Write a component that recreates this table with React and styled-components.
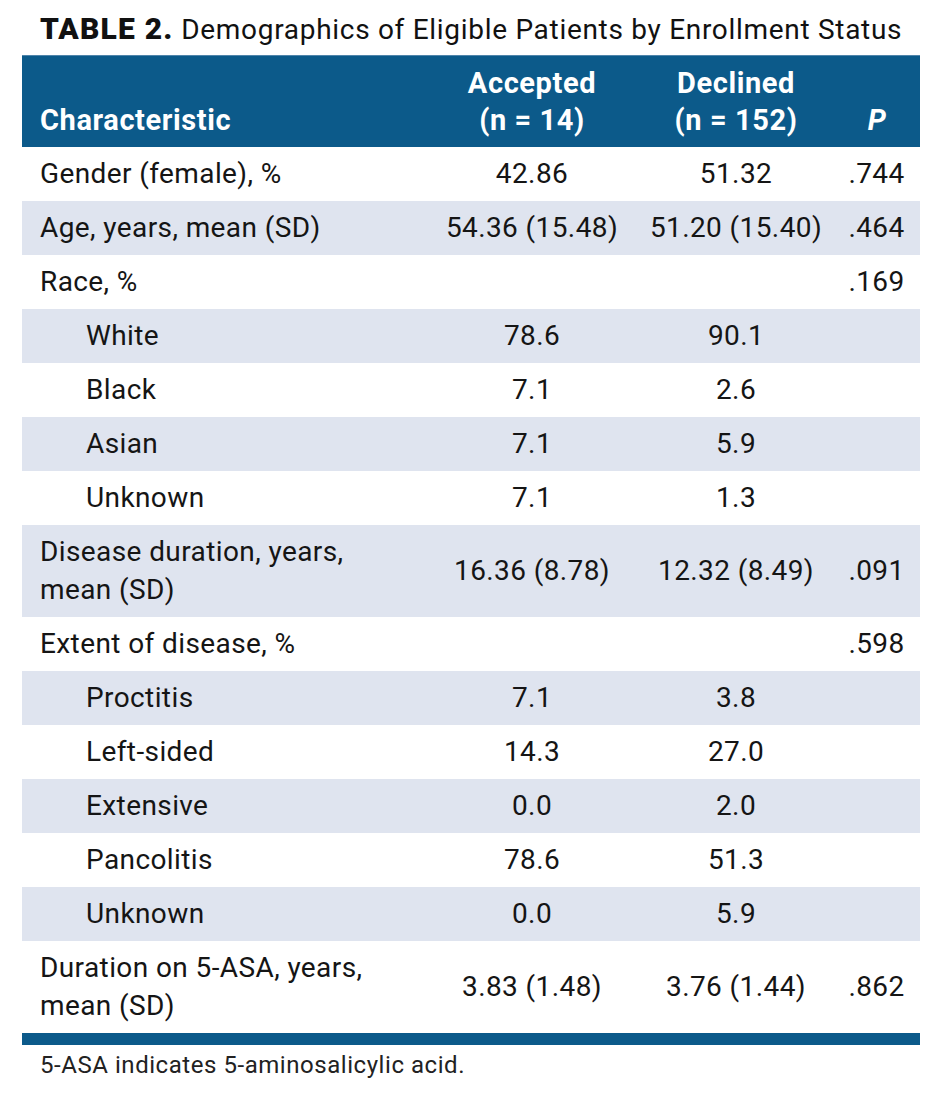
import React from "react";
import styled, { createGlobalStyle } from "styled-components";

const GlobalStyle = createGlobalStyle`
  body {
    margin: 0;
    background: #ffffff;
    font-family: Roboto, "Noto Sans", "DejaVu Sans", sans-serif;
    color: #151515;
  }
`;

const rows = [
  { label: "Gender (female), %", a: "42.86", d: "51.32", p: ".744" },
  { label: "Age, years, mean (SD)", a: "54.36 (15.48)", d: "51.20 (15.40)", p: ".464" },
  { label: "Race, %", a: "", d: "", p: ".169" },
  { label: "White", a: "78.6", d: "90.1", sub: true },
  { label: "Black", a: "7.1", d: "2.6", sub: true },
  { label: "Asian", a: "7.1", d: "5.9", sub: true },
  { label: "Unknown", a: "7.1", d: "1.3", sub: true },
  { label: ["Disease duration, years,", "mean (SD)"], a: "16.36 (8.78)", d: "12.32 (8.49)", p: ".091" },
  { label: "Extent of disease, %", a: "", d: "", p: ".598" },
  { label: "Proctitis", a: "7.1", d: "3.8", sub: true },
  { label: "Left-sided", a: "14.3", d: "27.0", sub: true },
  { label: "Extensive", a: "0.0", d: "2.0", sub: true },
  { label: "Pancolitis", a: "78.6", d: "51.3", sub: true },
  { label: "Unknown", a: "0.0", d: "5.9", sub: true },
  { label: ["Duration on 5-ASA, years,", "mean (SD)"], a: "3.83 (1.48)", d: "3.76 (1.44)", p: ".862" },
];

const App = () => {
  return (
    <>
      <GlobalStyle />
      <Page>
        <Title>
          <b>TABLE 2.</b> Demographics of Eligible Patients by Enrollment Status
        </Title>
        <Table>
          <HeadRow>
            <HeadLabel>Characteristic</HeadLabel>
            <HeadCell>
              Accepted
              <br />
              (n = 14)
            </HeadCell>
            <HeadCell>
              Declined
              <br />
              (n = 152)
            </HeadCell>
            <HeadCell $p>
              <i>P</i>
            </HeadCell>
          </HeadRow>
          {rows.map((r, i) => (
            <Row key={i} $shaded={i % 2 === 1}>
              <Label $sub={r.sub}>
                {Array.isArray(r.label)
                  ? r.label.map((l, j) => <div key={j}>{l}</div>)
                  : r.label}
              </Label>
              <Cell>{r.a}</Cell>
              <Cell>{r.d}</Cell>
              <Cell $p>{r.p}</Cell>
            </Row>
          ))}
          <BottomBar />
        </Table>
        <Footnote>5-ASA indicates 5-aminosalicylic acid.</Footnote>
      </Page>
    </>
  );
};

const Page = styled.div`
  width: 944px;
  padding: 0 24px 0 22px;
  box-sizing: border-box;
`;

const Title = styled.div`
  height: 55px;
  padding: 11px 0 0 18px;
  box-sizing: border-box;
  font-size: 28px;
  line-height: 36px;
  letter-spacing: 0.7px;
  color: #111;
  white-space: nowrap;

  b {
    font-weight: 900;
    font-size: 30px;
    letter-spacing: 1.2px;
  }
`;

const Table = styled.div`
  width: 898px;
  display: flex;
  flex-direction: column;
`;

const grid = `
  display: grid;
  grid-template-columns: 408px 204px 204px 82px;
`;

const HeadRow = styled.div`
  ${grid}
  height: 92px;
  padding-bottom: 8px;
  box-sizing: border-box;
  background: #0c5a8a;
  border-top: 1px solid #4f84aa;
  color: #ffffff;
  font-weight: 700;
  font-size: 29px;
  line-height: 37px;
  letter-spacing: 0.6px;
  align-items: end;
`;

const HeadLabel = styled.div`
  padding-left: 18px;
`;

const HeadCell = styled.div`
  text-align: center;
  padding-right: ${(p) => (p.$p ? "4px" : "0")};

  i {
    font-style: italic;
  }
`;

const Row = styled.div`
  ${grid}
  min-height: 54px;
  padding: 8px 0;
  box-sizing: border-box;
  align-items: center;
  background: ${(p) => (p.$shaded ? "#dfe4ef" : "#ffffff")};
  font-size: 28px;
  line-height: 38px;
  letter-spacing: 0.4px;
`;

const Label = styled.div`
  padding-left: ${(p) => (p.$sub ? "64px" : "18px")};
`;

const Cell = styled.div`
  text-align: center;
  padding-right: ${(p) => (p.$p ? "5px" : "0")};
`;

const BottomBar = styled.div`
  height: 12px;
  background: #0c5a8a;
`;

const Footnote = styled.div`
  padding: 5px 0 0 18px;
  font-size: 24px;
  line-height: 30px;
  letter-spacing: 0.55px;
  color: #222;
`;

export default App;
